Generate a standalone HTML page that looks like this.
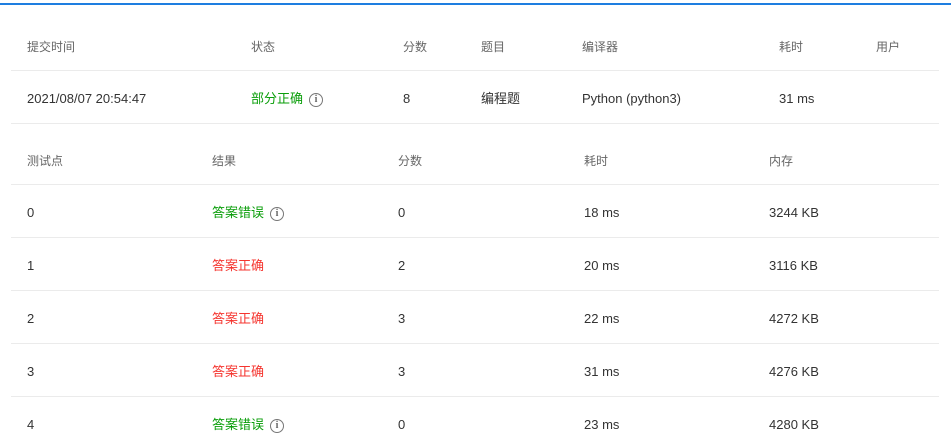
<!DOCTYPE html>
<html><head><meta charset="utf-8"><style>
body{margin:0;width:951px;height:438px;overflow:hidden;background:#fff;font-family:"Liberation Sans","Noto Sans CJK SC",sans-serif;font-size:13px;color:#333;position:relative}
.bar{position:absolute;left:0;top:3px;width:951px;height:2px;background:#1e7ee0}
.line{position:absolute;left:11px;width:928px;height:1px;background:#ebebeb}
.t{position:absolute;white-space:nowrap;line-height:16px}
.h{color:#666;font-size:12px}
.g{color:#0a9e0a}
.r{color:#f5352f}
.i{display:inline-block;width:12px;height:12px;border:1px solid #777;border-radius:50%;color:#666;font-size:10px;line-height:12px;text-align:center;font-weight:bold;margin-left:6px;vertical-align:1px;font-family:"Liberation Serif",serif}
</style></head><body>
<div class="bar"></div>
<div class="t h" style="left:27px;top:39px">提交时间</div>
<div class="t h" style="left:251px;top:39px">状态</div>
<div class="t h" style="left:403px;top:39px">分数</div>
<div class="t h" style="left:481px;top:39px">题目</div>
<div class="t h" style="left:582px;top:39px">编译器</div>
<div class="t h" style="left:779px;top:39px">耗时</div>
<div class="t h" style="left:876px;top:39px">用户</div>
<div class="line" style="top:70px"></div>
<div class="t" style="left:27px;top:91px">2021/08/07 20:54:47</div>
<div class="t g" style="left:251px;top:91px">部分正确<span class="i">i</span></div>
<div class="t" style="left:403px;top:91px">8</div>
<div class="t" style="left:481px;top:91px">编程题</div>
<div class="t" style="left:582px;top:91px">Python (python3)</div>
<div class="t" style="left:779px;top:91px">31 ms</div>
<div class="line" style="top:123px"></div>
<div class="t h" style="left:27px;top:153px">测试点</div>
<div class="t h" style="left:212px;top:153px">结果</div>
<div class="t h" style="left:398px;top:153px">分数</div>
<div class="t h" style="left:584px;top:153px">耗时</div>
<div class="t h" style="left:769px;top:153px">内存</div>
<div class="line" style="top:184px"></div>
<div class="t" style="left:27px;top:205px">0</div><div class="t g" style="left:212px;top:205px">答案错误<span class="i">i</span></div><div class="t" style="left:398px;top:205px">0</div><div class="t" style="left:584px;top:205px">18 ms</div><div class="t" style="left:769px;top:205px">3244 KB</div>
<div class="line" style="top:237px"></div>
<div class="t" style="left:27px;top:258px">1</div><div class="t r" style="left:212px;top:258px">答案正确</div><div class="t" style="left:398px;top:258px">2</div><div class="t" style="left:584px;top:258px">20 ms</div><div class="t" style="left:769px;top:258px">3116 KB</div>
<div class="line" style="top:290px"></div>
<div class="t" style="left:27px;top:311px">2</div><div class="t r" style="left:212px;top:311px">答案正确</div><div class="t" style="left:398px;top:311px">3</div><div class="t" style="left:584px;top:311px">22 ms</div><div class="t" style="left:769px;top:311px">4272 KB</div>
<div class="line" style="top:343px"></div>
<div class="t" style="left:27px;top:364px">3</div><div class="t r" style="left:212px;top:364px">答案正确</div><div class="t" style="left:398px;top:364px">3</div><div class="t" style="left:584px;top:364px">31 ms</div><div class="t" style="left:769px;top:364px">4276 KB</div>
<div class="line" style="top:396px"></div>
<div class="t" style="left:27px;top:417px">4</div><div class="t g" style="left:212px;top:417px">答案错误<span class="i">i</span></div><div class="t" style="left:398px;top:417px">0</div><div class="t" style="left:584px;top:417px">23 ms</div><div class="t" style="left:769px;top:417px">4280 KB</div>
</body></html>
